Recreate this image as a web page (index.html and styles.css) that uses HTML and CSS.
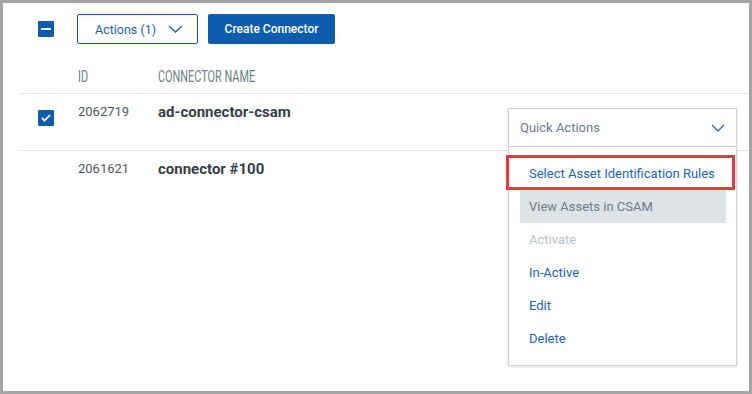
FILE: index.html
```html
<!DOCTYPE html>
<html lang="en">
<head>
  <meta charset="UTF-8" />
  <title>Connectors</title>
  <link rel="stylesheet" href="styles.css">
</head>
<body>
  <div class="page">
    <div class="toolbar">
      <span class="check partial"><span class="dash"></span></span>
      <button class="btn-outline">Actions (1)
        <svg class="chev" width="15" height="8" viewBox="0 0 15 8"><path d="M1 1l6.5 6L14 1" fill="none" stroke="#1a5fae" stroke-width="1.3"/></svg>
      </button>
      <button class="btn-primary">Create Connector</button>
    </div>

    <div class="thead">
      <span></span>
      <span class="th">ID</span>
      <span class="th">CONNECTOR NAME</span>
    </div>

    <div class="row first">
      <span class="check checked">
        <svg width="10" height="8" viewBox="0 0 10 8"><path d="M1 4l2.6 2.6L9 1.2" fill="none" stroke="#fff" stroke-width="1.8"/></svg>
      </span>
      <span class="cell-id">2062719</span>
      <span class="cell-name">ad-connector-csam</span>
      <div class="quick">
        <div class="quick-select">
          <span>Quick Actions</span>
          <svg width="14" height="8" viewBox="0 0 14 8"><path d="M1 1l6 6 6-6" fill="none" stroke="#2a6fc4" stroke-width="1.3"/></svg>
        </div>
        <ul class="quick-menu">
          <li class="item">Select Asset Identification Rules</li>
          <li class="item hover">View Assets in CSAM</li>
          <li class="item disabled">Activate</li>
          <li class="item">In-Active</li>
          <li class="item">Edit</li>
          <li class="item">Delete</li>
          <span class="callout"></span>
        </ul>
      </div>
    </div>

    <div class="row">
      <span></span>
      <span class="cell-id">2061621</span>
      <span class="cell-name">connector #100</span>
    </div>
  </div>
</body>
</html>
```

FILE: styles.css
```css
body {
  margin: 0;
  background: #a5a5a5;
  font-family: Roboto, 'Liberation Sans', sans-serif;
}

.page {
  margin: 3px;
  height: 388px;
  background: #fff;
  padding: 11px 0 0 17px;
  box-sizing: border-box;
  overflow: hidden;
}

.toolbar {
  display: flex;
  align-items: center;
  height: 30px;
  padding-left: 18px;
}

.check {
  width: 16px;
  height: 16px;
  background: #0d5cad;
  border-radius: 1px;
  display: flex;
  align-items: center;
  justify-content: center;
}

.check .dash {
  width: 10px;
  height: 2px;
  background: #fff;
}

.btn-outline {
  margin-left: 23px;
  width: 121px;
  height: 30px;
  border: 1px solid #1a5fae;
  border-radius: 2px;
  background: #fff;
  color: #1a5fae;
  font-family: inherit;
  font-size: 12.5px;
  display: flex;
  align-items: center;
  padding: 0 0 0 17px;
  gap: 12px;
  cursor: pointer;
}

.btn-primary {
  margin-left: 10px;
  width: 127px;
  height: 30px;
  border: none;
  border-radius: 2px;
  background: #0d5cad;
  color: #fff;
  font-family: inherit;
  font-size: 12px;
  font-weight: 500;
  cursor: pointer;
}

.thead {
  display: grid;
  grid-template-columns: 58px 80px 1fr;
  height: 50px;
  align-items: end;
  padding-bottom: 7px;
  box-sizing: border-box;
  border-bottom: 1px solid #e1e5e8;
}

.th {
  justify-self: start;
  display: inline-block;
  font-size: 16px;
  line-height: 18px;
  color: #6f7e8b;
  transform: scaleX(0.68);
  transform-origin: left center;
}

.row {
  display: grid;
  grid-template-columns: 58px 80px 1fr 229px;
  align-items: start;
  height: 57px;
  box-sizing: border-box;
  padding: 9px 12px 0 0;
}

.row.first {
  border-bottom: 1px solid #e1e5e8;
}

.row .check {
  margin: 7px 0 0 18px;
}

.cell-id {
  font-size: 13px;
  line-height: 18px;
  color: #4d5760;
}

.cell-name {
  font-size: 15px;
  line-height: 18px;
  font-weight: 700;
  color: #353f48;
}

.quick {
  position: relative;
  margin-top: 5px;
  border: 1px solid #c9d3da;
  box-shadow: 0 1px 3px rgba(0, 0, 0, 0.12);
  background: #fff;
  z-index: 2;
}

.quick-select {
  height: 37px;
  display: flex;
  align-items: center;
  justify-content: space-between;
  padding: 0 11px;
  font-size: 13px;
  color: #6b7c8b;
  border-bottom: 1px solid #c3ccd3;
}

.quick-menu {
  position: relative;
  list-style: none;
  margin: 0;
  padding: 10px 10px 10px 11px;
}

.item {
  height: 33px;
  line-height: 33px;
  padding-left: 9px;
  font-size: 13px;
  color: #1d64bb;
}

.item.hover {
  background: #dee3e7;
  color: #6b7c8b;
}

.item.disabled {
  color: #b9c3cb;
}

.callout {
  position: absolute;
  left: -3px;
  top: 8px;
  width: 229px;
  height: 35px;
  border: 3px solid #e8393e;
  box-sizing: border-box;
}
```
